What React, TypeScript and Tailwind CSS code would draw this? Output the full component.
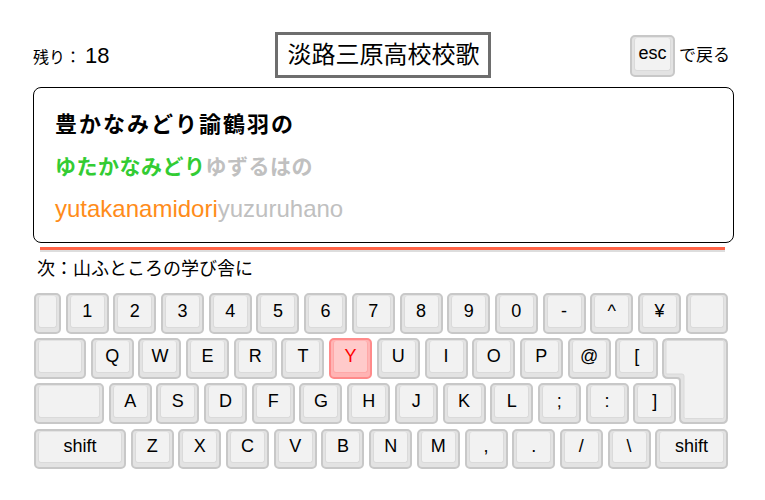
const font = { fontFamily: '"Liberation Sans", "Noto Sans CJK JP", sans-serif' };

const row1 = ['1', '2', '3', '4', '5', '6', '7', '8', '9', '0', '-', '^', '¥'];
const row2 = ['Q', 'W', 'E', 'R', 'T', 'Y', 'U', 'I', 'O', 'P', '@', '['];
const row3 = ['A', 'S', 'D', 'F', 'G', 'H', 'J', 'K', 'L', ';', ':', ']'];
const row4 = ['Z', 'X', 'C', 'V', 'B', 'N', 'M', ',', '.', '/', '\\'];

function Key({ label = '', w = 'w-[43px]', active = false }: { label?: string; w?: string; active?: boolean }) {
  return (
    <div
      className={`${w} h-full shrink-0 rounded-[5px] border-2 px-[2px] pt-[1px] pb-[4px] ${
        active ? 'border-[#ff8a8a] bg-[#ffb4b4]' : 'border-[#c8c8c8] bg-[#e3e3e3]'
      }`}
    >
      <div
        className={`h-full rounded-[3px] border border-t-0 flex items-center justify-center text-[18px] ${
          active ? 'bg-[#ffcaca] border-[#ffa8a8] text-[#ff0000]' : 'bg-[#f2f2f2] border-[#dadada] text-black'
        }`}
      >
        {label}
      </div>
    </div>
  );
}

function EnterKey() {
  return (
    <svg className="absolute right-0 top-0" width="66" height="86" viewBox="0 0 66 86">
      <path
        d="M6,1 H60 Q65,1 65,6 V80 Q65,85 60,85 H23 Q18,85 18,80 V43 Q18,40 15,40 H6 Q1,40 1,35 V6 Q1,1 6,1 Z"
        fill="#e3e3e3"
        stroke="#c8c8c8"
        strokeWidth="2"
      />
      <path
        d="M5,2.5 H61 Q62,2.5 62,4 V79 Q62,80.5 60.5,80.5 H23.5 Q22,80.5 22,79 V38 Q22,36 20,36 H5 Q4,36 4,35 V4 Q4,2.5 5,2.5 Z"
        fill="#f2f2f2"
        stroke="#dadada"
        strokeWidth="1"
      />
    </svg>
  );
}

export default function App() {
  return (
    <div className="w-[765px] h-[500px] bg-white text-black overflow-hidden" style={font}>
      <div className="ml-[33px] w-[701px] pt-[32px]">
        {/* header */}
        <div className="grid grid-cols-3 items-center h-[46px]">
          <div className="flex items-baseline">
            <span className="text-[16px]">残り：</span>
            <span className="text-[22px] ml-[4px]">18</span>
          </div>
          <div className="justify-self-center h-[46px] px-[9px] border-[3px] border-[#6e6e6e] flex items-center text-[24px] whitespace-nowrap">
            淡路三原高校校歌
          </div>
          <div className="justify-self-end flex items-center pr-[4px] pt-[1px]">
            <div className="w-[45px] h-[42px] rounded-[5px] border-2 border-[#c8c8c8] bg-[#e3e3e3] px-[2px] pt-[1px] pb-[4px]">
              <div className="h-full rounded-[3px] border border-t-0 border-[#dadada] bg-[#f2f2f2] flex items-center justify-center text-[18px]">
                esc
              </div>
            </div>
            <span className="ml-[4px] text-[17px]">で戻る</span>
          </div>
        </div>

        {/* prompt box */}
        <div className="mt-[9px] border border-black rounded-[8px] pl-[21px] pt-[16px] pb-[12px]">
          <div className="text-[22px] tracking-[2px] font-bold leading-[42px]">豊かなみどり諭鶴羽の</div>
          <div className="text-[21px] tracking-[0.5px] font-bold leading-[42px]">
            <span className="text-[#33cc33]">ゆたかなみどり</span>
            <span className="text-[#c0c0c0]">ゆずるはの</span>
          </div>
          <div className="text-[24px] leading-[42px]">
            <span className="text-[#ff8c1a]">yutakanamidori</span>
            <span className="text-[#c0c0c0]">yuzuruhano</span>
          </div>
        </div>

        {/* progress */}
        <div className="mt-[4px] ml-[7px] w-[685px] h-[5px] bg-[#dddddd]">
          <div className="h-[3px] w-full bg-[#ff6347]" />
        </div>

        <div className="mt-[4px] ml-[4px] text-[18px] leading-[27px]">次：山ふところの学び舎に</div>

        {/* keyboard */}
        <div className="mt-[10px] ml-[1px] w-[694px] flex flex-col gap-[4.7px]">
          <div className="flex gap-[4.7px] h-[40.5px]">
            <Key w="w-[27px]" />
            {row1.map((k) => (
              <Key key={k} label={k} />
            ))}
            <Key w="flex-1" />
          </div>
          <div className="relative flex flex-col gap-[4.7px]">
            <div className="flex gap-[4.7px] h-[40.5px]">
              <Key w="w-[52px]" />
              {row2.map((k) => (
                <Key key={k} label={k} active={k === 'Y'} />
              ))}
              <div className="w-[65px] shrink-0" />
            </div>
            <div className="flex gap-[4.7px] h-[40.5px]">
              <Key w="w-[70px]" />
              {row3.map((k) => (
                <Key key={k} label={k} />
              ))}
              <div className="w-[47px] shrink-0" />
            </div>
            <EnterKey />
          </div>
          <div className="flex gap-[4.7px] h-[40.5px]">
            <Key w="w-[92px]" label="shift" />
            {row4.map((k) => (
              <Key key={k} label={k} />
            ))}
            <Key w="flex-1" label="shift" />
          </div>
        </div>
      </div>
    </div>
  );
}
